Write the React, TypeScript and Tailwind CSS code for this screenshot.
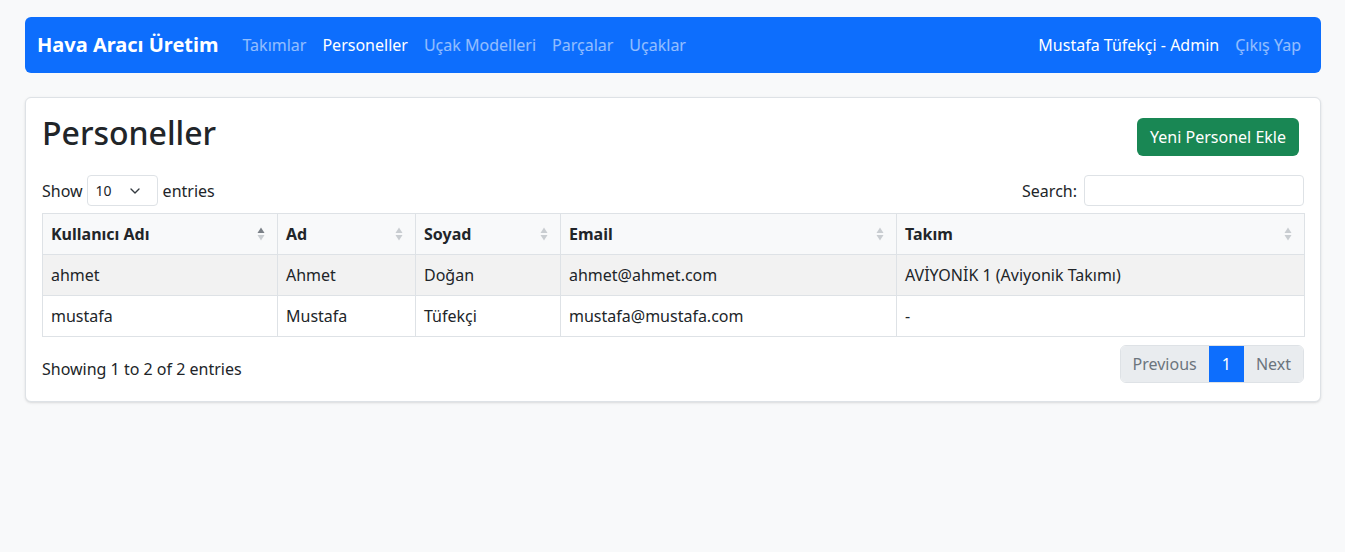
import { ChevronDown } from "lucide-react";

const rows = [
  { user: "ahmet", ad: "Ahmet", soyad: "Doğan", email: "ahmet@ahmet.com", takim: "AVİYONİK 1 (Aviyonik Takımı)" },
  { user: "mustafa", ad: "Mustafa", soyad: "Tüfekçi", email: "mustafa@mustafa.com", takim: "-" },
];

const columns = [
  { label: "Kullanıcı Adı", width: "w-[235px]", active: true },
  { label: "Ad", width: "w-[138px]", active: false },
  { label: "Soyad", width: "w-[145px]", active: false },
  { label: "Email", width: "w-[336px]", active: false },
  { label: "Takım", width: "", active: false },
];

function SortIcon({ active }: { active: boolean }) {
  return (
    <svg width="8" height="16" viewBox="0 0 8 16" className="shrink-0">
      <path d="M4 1.5 L7.5 7 L0.5 7 Z" fill={active ? "#7a8087" : "#c9cdd1"} />
      <path d="M4 14.5 L7.5 9 L0.5 9 Z" fill="#c9cdd1" />
    </svg>
  );
}

export default function App() {
  return (
    <div className="min-h-[552px] bg-[#f8f9fa] pl-[25px] pr-[24px] pt-[17px] text-[#212529]" style={{ fontFamily: '"Noto Sans", sans-serif' }}>
      {/* Navbar */}
      <nav className="flex h-[56px] items-center justify-between rounded-md bg-[#0d6efd] px-3">
        <div className="flex items-center">
          <span className="mr-4 text-[20px] font-bold text-white">Hava Aracı Üretim</span>
          <a className="px-2 text-[16px] text-white/55">Takımlar</a>
          <a className="px-2 text-[16px] text-white">Personeller</a>
          <a className="px-2 text-[16px] text-white/55">Uçak Modelleri</a>
          <a className="px-2 text-[16px] text-white/55">Parçalar</a>
          <a className="px-2 text-[16px] text-white/55">Uçaklar</a>
        </div>
        <div className="flex items-center">
          <span className="mr-2 text-[16px] text-white">Mustafa Tüfekçi - Admin</span>
          <a className="px-2 text-[16px] text-white/55">Çıkış Yap</a>
        </div>
      </nav>

      {/* Card */}
      <div className="mt-6 rounded-md border border-[#dee2e6] bg-white px-4 pb-[18px] pt-4 shadow-sm">
        <div className="flex items-start justify-between pr-[5px]">
          <h2 className="text-[32px] font-medium leading-[1.2]">Personeller</h2>
          <button className="mt-[4px] h-[38px] rounded-md bg-[#198754] px-[13px] text-[16px] text-white">
            Yeni Personel Ekle
          </button>
        </div>

        <div className="mt-[19px] flex items-center justify-between text-[16px]">
          <div className="flex items-center">
            <span>Show</span>
            <div className="ml-[4px] mr-[5px] flex h-[31px] w-[71px] items-center justify-between rounded-[4px] border border-[#dee2e6] pl-2 pr-[14px] text-[14px]">
              <span>10</span>
              <ChevronDown size={16} strokeWidth={2} className="text-[#343a40]" />
            </div>
            <span>entries</span>
          </div>
          <div className="flex items-center">
            <span className="mr-[7px]">Search:</span>
            <div className="h-[31px] w-[220px] rounded-[4px] border border-[#dee2e6]" />
          </div>
        </div>

        <table className="mt-[7px] w-[1263px] table-fixed border-collapse text-[16px]">
          <thead>
            <tr className="h-[41px] bg-[#f8f9fa]">
              {columns.map((c) => (
                <th key={c.label} className={`${c.width} border border-[#dee2e6] px-2 text-left font-bold`}>
                  <div className="flex items-center justify-between pr-[4px]">
                    <span>{c.label}</span>
                    <SortIcon active={c.active} />
                  </div>
                </th>
              ))}
            </tr>
          </thead>
          <tbody>
            {rows.map((r, i) => (
              <tr key={r.user} className={`h-[41px] ${i === 0 ? "bg-[#f2f2f2]" : "bg-white"}`}>
                <td className="border border-[#dee2e6] px-2">{r.user}</td>
                <td className="border border-[#dee2e6] px-2">{r.ad}</td>
                <td className="border border-[#dee2e6] px-2">{r.soyad}</td>
                <td className="border border-[#dee2e6] px-2">{r.email}</td>
                <td className="border border-[#dee2e6] px-2">{r.takim}</td>
              </tr>
            ))}
          </tbody>
        </table>

        <div className="mt-[8px] flex items-start justify-between">
          <span className="pt-[12px] text-[16px] leading-[24px]">Showing 1 to 2 of 2 entries</span>
          <div className="flex h-[38px] overflow-hidden rounded-md border border-[#dee2e6] text-[16px]">
            <span className="flex items-center bg-[#e9ecef] px-3 text-[#6c757d]">Previous</span>
            <span className="flex items-center bg-[#0d6efd] px-[13px] text-white">1</span>
            <span className="flex items-center bg-[#e9ecef] px-3 text-[#6c757d]">Next</span>
          </div>
        </div>
      </div>
    </div>
  );
}
